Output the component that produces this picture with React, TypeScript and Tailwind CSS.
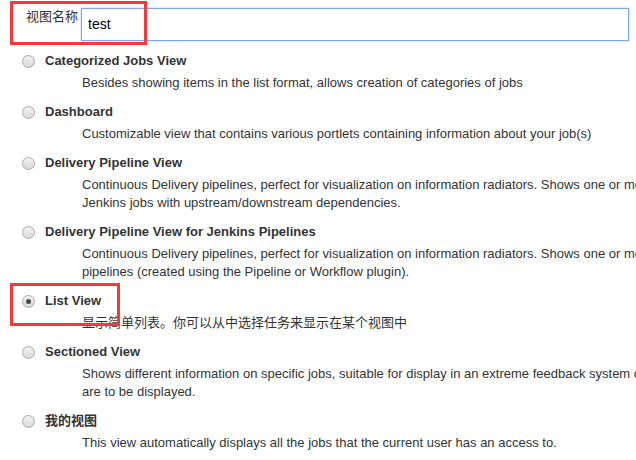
import React from "react";

function Radio({ checked }: { checked?: boolean }) {
  return (
    <div className="w-[13px] h-[13px] shrink-0 rounded-full border border-[#a9a9a9] bg-gradient-to-b from-[#f2f2f2] to-[#d9d9d9] flex items-center justify-center">
      {checked && <div className="w-[5px] h-[5px] rounded-full bg-[#4a4a4a]" />}
    </div>
  );
}

function Item({ title, lines, checked }: { title: string; lines: string[]; checked?: boolean }) {
  return (
    <div>
      <div className="flex items-center h-[22px]">
        <Radio checked={checked} />
        <span className="ml-[10px] font-bold leading-[22px] whitespace-nowrap">{title}</span>
      </div>
      <div className="mt-[2px] ml-[60px] leading-[18px] whitespace-nowrap">
        {lines.map((l, i) => (
          <div key={i}>{l}</div>
        ))}
      </div>
    </div>
  );
}

export default function App() {
  return (
    <div className="relative w-[636px] h-[460px] overflow-hidden bg-white text-[13px] text-[#333] font-['Liberation_Sans','Noto_Sans_CJK_SC',sans-serif]">
      <div className="flex items-start pt-[8px] pl-[26px]">
        <div className="w-[55px] leading-[18px] whitespace-nowrap">视图名称</div>
        <div className="w-[548px] h-[33px] border border-[#7ea6e8] shadow-[0_0_2px_#a9c3f0] px-[6px] flex items-center text-[14px] text-black">
          test
        </div>
      </div>
      <div className="pl-[22px] pt-[9px] flex flex-col gap-[9px]">
        <Item
          title="Categorized Jobs View"
          lines={["Besides showing items in the list format, allows creation of categories of jobs"]}
        />
        <Item
          title="Dashboard"
          lines={["Customizable view that contains various portlets containing information about your job(s)"]}
        />
        <Item
          title="Delivery Pipeline View"
          lines={[
            "Continuous Delivery pipelines, perfect for visualization on information radiators. Shows one or more",
            "Jenkins jobs with upstream/downstream dependencies.",
          ]}
        />
        <Item
          title="Delivery Pipeline View for Jenkins Pipelines"
          lines={[
            "Continuous Delivery pipelines, perfect for visualization on information radiators. Shows one or more",
            "pipelines (created using the Pipeline or Workflow plugin).",
          ]}
        />
        <Item title="List View" checked lines={["显示简单列表。你可以从中选择任务来显示在某个视图中"]} />
        <Item
          title="Sectioned View"
          lines={[
            "Shows different information on specific jobs, suitable for display in an extreme feedback system or",
            "are to be displayed.",
          ]}
        />
        <Item
          title="我的视图"
          lines={["This view automatically displays all the jobs that the current user has an access to."]}
        />
      </div>
      <div className="absolute left-[10px] top-[1px] w-[137px] h-[44px] border-[3px] border-[#f23a3a]" />
      <div className="absolute left-[10px] top-[283px] w-[110px] h-[43px] border-[3px] border-[#f23a3a]" />
    </div>
  );
}
